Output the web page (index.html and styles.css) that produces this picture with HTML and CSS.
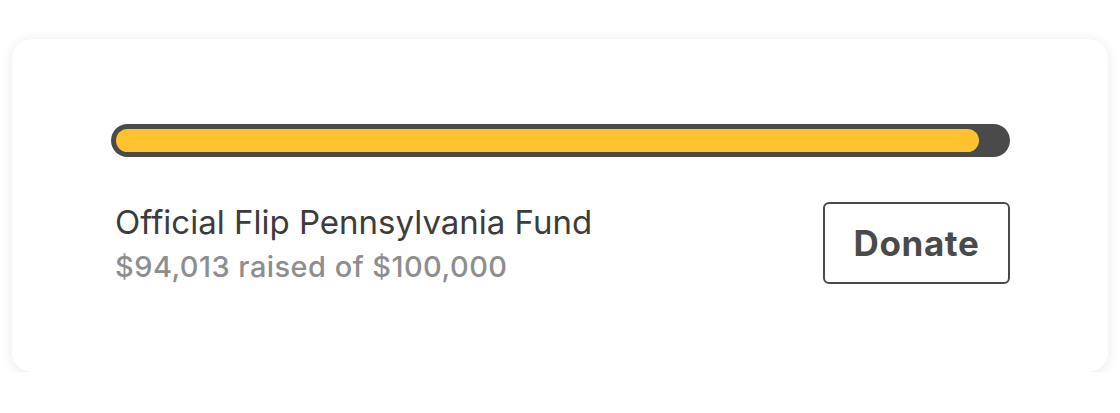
FILE: index.html
```html
<!DOCTYPE html>
<html>
<head>
<meta charset="utf-8">
<link rel="stylesheet" href="styles.css">
</head>
<body>
<div class="card">
  <div class="bar">
    <div class="bar-fill" style="width: 97.1%"></div>
  </div>
  <div class="info">
    <div class="text">
      <div class="title">Official Flip Pennsylvania Fund</div>
      <div class="raised">$94,013 raised of $100,000</div>
    </div>
    <button class="donate">Donate</button>
  </div>
</div>
</body>
</html>
```

FILE: styles.css
```css
html, body {
  margin: 0;
  padding: 0;
  background: #ffffff;
}
body {
  padding: 39px 12px 0 12px;
  font-family: Inter, "Liberation Sans", sans-serif;
}
.card {
  width: 1096px;
  height: 333px;
  box-sizing: border-box;
  background: #ffffff;
  border-radius: 20px;
  box-shadow: 0 2px 14px rgba(0, 0, 0, 0.09);
  padding: 85px 98px 0 99px;
}
.bar {
  height: 33px;
  box-sizing: border-box;
  background: #4a4a4a;
  border-radius: 17px;
  padding: 5px;
}
.bar-fill {
  height: 23px;
  background: #fec22e;
  border-radius: 12px;
}
.info {
  display: flex;
  justify-content: space-between;
  align-items: flex-start;
  margin-top: 45px;
}
.text {
  padding-left: 4px;
  padding-top: 0;
}
.title {
  font-size: 33px;
  color: #3c3c3c;
  line-height: 40px;
}
.raised {
  font-size: 29px;
  font-weight: 500;
  letter-spacing: 0.45px;
  color: #8e8e8e;
  line-height: 34px;
  margin-top: 8px;
}
.donate {
  width: 187px;
  height: 82px;
  box-sizing: border-box;
  border: 2px solid #4a4a4a;
  border-radius: 6px;
  background: #ffffff;
  font-family: Inter, "Liberation Sans", sans-serif;
  font-size: 35px;
  font-weight: 700;
  letter-spacing: 0.6px;
  color: #4a4a4a;
  padding: 0;
  margin-top: 0;
}
```
